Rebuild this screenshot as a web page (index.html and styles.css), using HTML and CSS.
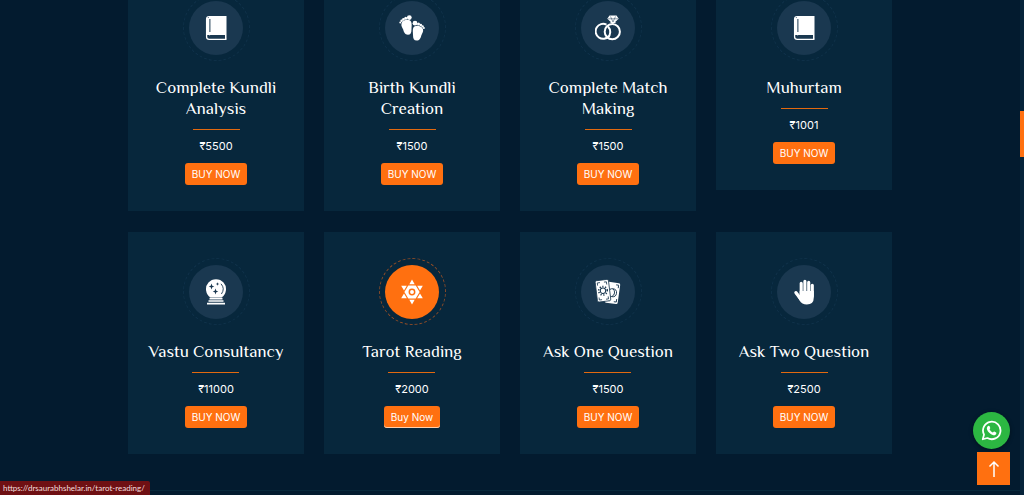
FILE: index.html
```html
<!DOCTYPE html>
<html lang="en">
<head>
<meta charset="utf-8">
<title>Astrology Services</title>
<meta name="viewport" content="width=device-width, initial-scale=1">
<link rel="stylesheet" href="styles.css">
</head>
<body>
<svg class="sprite" aria-hidden="true">
  <symbol id="book" viewBox="0 0 26 26">
    <path d="M6 1h17.500v19H7.500q-1 0-1.500.5z" fill="currentColor"/>
    <path d="M6 1.600Q3.600 1.600 3.600 4v18q0 2.400 2.700 2.400H23.500" fill="none" stroke="currentColor" stroke-width="1.300"/>
    <path d="M4 3h3v17H4zM22 20h1.500v4H22z" fill="currentColor"/>
    <path d="M6.900 4v13" stroke="#1a3850" stroke-width="1"/>
  </symbol>
  <symbol id="feet" viewBox="0 0 26 26">
    <g fill="currentColor">
      <path d="M2.500 8.500c1-4 8.500-5 9.700-1.500.9 2.600.3 4.600.3 7.200 0 3.600-1 5.600-3.600 5.600-3 0-4-2.600-4.700-5.200C3.500 12.500 1.800 11.200 2.500 8.500z"/>
      <circle cx="10.300" cy="2.600" r="2.400"/><circle cx="6.700" cy="3.200" r="1.500"/><circle cx="4.400" cy="4.400" r="1.300"/><circle cx="2.600" cy="5.800" r="1.200"/><circle cx="1.300" cy="7.400" r="1"/>
      <path d="M24 14.300c-1-4-8.500-5-9.700-1.500-.9 2.600-.3 4.600-.3 7.200 0 3.600 1 5.600 3.600 5.600 3 0 4-2.600 4.700-5.200.7-2.100 2.400-3.400 1.700-6.100z"/>
      <circle cx="16" cy="8.200" r="2.400"/><circle cx="19.500" cy="8.900" r="1.500"/><circle cx="21.800" cy="10" r="1.300"/><circle cx="23.600" cy="11.400" r="1.200"/><circle cx="24.900" cy="13" r="1"/>
    </g>
  </symbol>
  <symbol id="rings" viewBox="0 0 26 26">
    <g fill="none" stroke="currentColor" stroke-width="2">
      <path d="M11.500 9.600A7.500 7.500 0 1 0 14 21"/>
      <path d="M13 11.500a8 8 0 0 1-.4 11.500"/>
      <circle cx="17.300" cy="16.700" r="7.600"/>
    </g>
    <path d="M14.500 .5h7l2.200 3.200L18 9l-5.700-5.300zM14.600 8l3.400-2 3.400 2z" fill="currentColor"/>
    <path d="M13 3.800h10M15.500 1.500l2.500 5.500 2.500-5.500" stroke="#1a3850" stroke-width=".5" fill="none"/>
  </symbol>
  <symbol id="crystal" viewBox="0 0 26 26">
    <path d="M7.500 18.500a10 10 0 1 1 11 0z" fill="currentColor"/>
    <path d="M6.500 19.600h13M5.500 22h15M4 24.600h18" stroke="currentColor" stroke-width="1.700"/>
    <path d="M8.500 4.500l.8 2.200 2 .8-2 .8-.8 2.200-.8-2.200-2-.8 2-.8zM12.500 9.500l.8 2.200 2 .8-2 .8-.8 2.200-.8-2.200-2-.8 2-.8zM14.500 3.300l.5 1.200 1.200.5-1.200.5-.5 1.200-.5-1.200-1.200-.5 1.200-.5z" fill="#1a3850"/>
    <path d="M18 4.800q4.300 4.800.4 10.200" fill="none" stroke="#1a3850" stroke-width=".9"/>
  </symbol>
  <symbol id="star" viewBox="0 0 26 26">
    <g fill="currentColor">
      <path d="M13 .5l2.700 4.800h-5.400zM13 25.500l2.700-4.800h-5.400zM2.200 6.700h5.600L5 11.600zM23.800 6.700h-5.600l2.800 4.900zM2.200 19.300h5.600L5 14.400zM23.800 19.300h-5.600l2.800-4.900z"/>
      <path d="M9.300 6.500h7.400l3.900 6.500-3.900 6.500H9.300L5.400 13z"/>
    </g>
    <circle cx="13" cy="13" r="2.700" fill="none" stroke="#ff7010" stroke-width="1.500"/>
  </symbol>
  <symbol id="cards" viewBox="0 0 26 26">
    <g transform="rotate(8 18 14)">
      <rect x="11" y="3.500" width="13" height="21" rx="1.500" fill="currentColor"/>
      <circle cx="17.500" cy="13.800" r="4" fill="none" stroke="#1a3850" stroke-width=".9"/>
      <path d="M17.500 10a4.500 4.500 0 0 1 0 7.500M22.500 5.500v3M20 5.500h2.500M22.500 22.500v-3M22.500 22.500H20M14 22h2" fill="none" stroke="#1a3850" stroke-width=".9"/>
    </g>
    <g transform="rotate(-7 8 12)">
      <rect x="1.300" y="1" width="13.400" height="21.500" rx="1.500" fill="currentColor" stroke="#1a3850" stroke-width=".8"/>
      <circle cx="8" cy="11.700" r="2.700" fill="none" stroke="#1a3850" stroke-width="1"/>
      <circle cx="8" cy="11.700" r="4.300" fill="none" stroke="#1a3850" stroke-width="1.500" stroke-dasharray="1.200 1.600"/>
      <path d="M3.300 6V3.300H6M12.500 6V3.300H10M3.300 18v2.500H6M12.500 18v2.500H10" fill="none" stroke="#1a3850" stroke-width=".8"/>
    </g>
  </symbol>
  <symbol id="hand" viewBox="0 0 26 26">
    <g stroke="currentColor" stroke-linecap="round" fill="none">
      <path d="M10.200 15V4.200M13.900 15V2.200M17.700 15V3.300M21.300 17V6.200" stroke-width="3.100"/>
      <path d="M5 13.700l5 6.500" stroke-width="3.400"/>
    </g>
    <path d="M8.700 12h14.100v6.500q0 7-7 7-5 0-7.200-4L6 17l2.700-1z" fill="currentColor"/>
  </symbol>
</svg>

<main class="services">
  <article class="card">
    <div class="ring"><span class="disc"><svg class="icon"><use href="#book"/></svg></span></div>
    <h2 class="title">Complete Kundli Analysis</h2>
    <p class="price">₹5500</p>
    <a class="buy" href="#">BUY NOW</a>
  </article>
  <article class="card">
    <div class="ring"><span class="disc"><svg class="icon"><use href="#feet"/></svg></span></div>
    <h2 class="title">Birth Kundli Creation</h2>
    <p class="price">₹1500</p>
    <a class="buy" href="#">BUY NOW</a>
  </article>
  <article class="card">
    <div class="ring"><span class="disc"><svg class="icon"><use href="#rings"/></svg></span></div>
    <h2 class="title">Complete Match Making</h2>
    <p class="price">₹1500</p>
    <a class="buy" href="#">BUY NOW</a>
  </article>
  <article class="card">
    <div class="ring"><span class="disc"><svg class="icon"><use href="#book"/></svg></span></div>
    <h2 class="title">Muhurtam</h2>
    <p class="price">₹1001</p>
    <a class="buy" href="#">BUY NOW</a>
  </article>
  <article class="card">
    <div class="ring"><span class="disc"><svg class="icon"><use href="#crystal"/></svg></span></div>
    <h2 class="title">Vastu Consultancy</h2>
    <p class="price">₹11000</p>
    <a class="buy" href="#">BUY NOW</a>
  </article>
  <article class="card active">
    <div class="ring"><span class="disc"><svg class="icon"><use href="#star"/></svg></span></div>
    <h2 class="title">Tarot Reading</h2>
    <p class="price">₹2000</p>
    <a class="buy" href="#">Buy Now</a>
  </article>
  <article class="card">
    <div class="ring"><span class="disc"><svg class="icon"><use href="#cards"/></svg></span></div>
    <h2 class="title">Ask One Question</h2>
    <p class="price">₹1500</p>
    <a class="buy" href="#">BUY NOW</a>
  </article>
  <article class="card">
    <div class="ring"><span class="disc"><svg class="icon"><use href="#hand"/></svg></span></div>
    <h2 class="title">Ask Two Question</h2>
    <p class="price">₹2500</p>
    <a class="buy" href="#">BUY NOW</a>
  </article>
</main>

<div class="floating">
  <a class="whatsapp" href="#" aria-label="WhatsApp">
    <svg viewBox="0 0 24 24" width="21" height="21">
      <path d="M2 22l1.500-5.300A10 10 0 1 1 7.300 20.600z" fill="none" stroke="#fff" stroke-width="2" stroke-linejoin="round"/>
      <path d="M8.600 6.700c.5-.2 1 0 1.200.5l.7 1.700c.2.500-.1.900-.8 1.700.9 1.700 2.100 2.900 4 3.700.7-.9 1-1.300 1.500-1.100l2 1c.5.300.4 1.100.1 1.700-.6 1.200-2 1.700-3.200 1.400-3.700-.9-6.400-3.600-7.300-6.600-.4-1.600.4-3.400 1.800-4z" fill="#fff"/>
    </svg>
  </a>
  <button class="to-top" type="button" aria-label="Back to top">
    <svg viewBox="0 0 12 18" width="12" height="18"><path d="M6 17V2M1.500 6.500L6 2l4.500 4.500" fill="none" stroke="#fff" stroke-width="1.500"/></svg>
  </button>
</div>
<div class="scroll-track"><div class="scroll-thumb"></div></div>
<div class="status">https://drsaurabhshelar.in/tarot-reading/</div>
</body>
</html>
```
FILE: styles.css
```css
* { box-sizing: border-box; }

body {
  margin: 0;
  min-height: 100vh;
  overflow: hidden;
  background: #031b2f;
  color: #fff;
  font-family: Inter, sans-serif;
}

.sprite { position: absolute; width: 0; height: 0; }

.services {
  display: grid;
  grid-template-columns: repeat(4, 1fr);
  align-items: start;
  gap: 21px 20px;
  max-width: 1200px;
  margin: -32px auto 0;
  padding: 0 132px 36px 128px;
  border-bottom: 1px solid #08283b;
}

.card {
  display: flex;
  flex-direction: column;
  align-items: center;
  padding: 26px 16px;
  background: #07273c;
  text-align: center;
}

.ring {
  display: grid;
  place-items: center;
  width: 67px;
  height: 67px;
  border: 1px dashed #10324a;
  border-radius: 50%;
}

.disc {
  display: grid;
  place-items: center;
  width: 54px;
  height: 54px;
  border-radius: 50%;
  background: #1a3850;
}

.active .ring { border-color: #8d4c28; }
.active .disc { background: #ff7010; }

.icon { width: 26px; height: 26px; color: #fff; }

.title {
  display: flex;
  flex-direction: column;
  align-items: center;
  gap: 10px;
  margin: 16px 0 0;
  font: 400 17px/21px Philosopher, Lato, sans-serif;
}

.title::after {
  content: "";
  width: 47px;
  height: 1px;
  background: #e2690f;
}

.price {
  margin: 6px 0 7px;
  font-size: 11px;
  line-height: 20px;
}

.buy {
  padding: 0 7px;
  border-radius: 3px;
  background: #ff7010;
  color: #fff;
  font-size: 10px;
  line-height: 22px;
  text-decoration: none;
}

.active .buy { box-shadow: inset 0 -1px #ffd0ad; }

.floating {
  position: fixed;
  right: 14px;
  bottom: 10px;
  display: flex;
  flex-direction: column;
  align-items: flex-end;
  gap: 3px;
}

.whatsapp {
  display: grid;
  place-items: center;
  width: 37px;
  height: 37px;
  border-radius: 50%;
  background: #2cb742;
  box-shadow: 0 1px 4px rgba(0, 0, 0, 0.4);
}

.to-top {
  display: grid;
  place-items: center;
  width: 33px;
  height: 33px;
  padding: 0;
  border: 0;
  background: #ff7010;
}

.scroll-track {
  position: fixed;
  inset: 0 0 0 auto;
  width: 4px;
  padding-top: 111px;
  background: #06243a;
}

.scroll-thumb { height: 46px; background: #ff7010; }

.status {
  position: fixed;
  left: 0;
  bottom: 0;
  padding: 0 5px 0 3px;
  border-top-right-radius: 2px;
  background: #6f1013;
  color: #f3dede;
  font: 8px/14px Lato, sans-serif;
}
```
